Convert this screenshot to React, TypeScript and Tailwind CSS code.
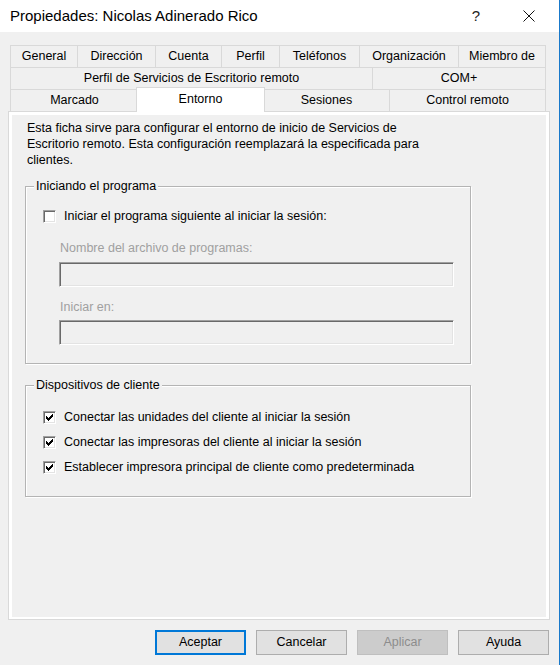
const row1 = [
  { label: "General", w: "w-[67px]" },
  { label: "Dirección", w: "w-[78px]" },
  { label: "Cuenta", w: "w-[66px]" },
  { label: "Perfil", w: "w-[58px]" },
  { label: "Teléfonos", w: "w-[80px]" },
  { label: "Organización", w: "w-[99px]" },
  { label: "Miembro de", w: "w-[88px]" },
]

const row2 = [
  { label: "Perfil de Servicios de Escritorio remoto", w: "w-[362px]" },
  { label: "COM+", w: "w-[174px]" },
]

const row3 = [
  { label: "Marcado", w: "w-[128px]" },
  { label: "Entorno", w: "w-[129px]", selected: true },
  { label: "Sesiones", w: "w-[126px]" },
  { label: "Control remoto", w: "w-[157px]" },
]

type TabDef = { label: string; w: string; selected?: boolean }

function TabRow({ tabs }: { tabs: TabDef[] }) {
  return (
    <div className="flex h-[22px]">
      {tabs.map((t) =>
        t.selected ? (
          <div
            key={t.label}
            className={`${t.w} relative z-10 -mx-[2px] -mt-[2px] flex h-[25px] items-center justify-center border-x border-t border-[#d9d9d9] bg-white pb-[1px]`}
          >
            {t.label}
          </div>
        ) : (
          <div
            key={t.label}
            className={`${t.w} flex h-[22px] items-center justify-center border-l border-t border-[#d9d9d9] bg-[#f0f0f0] last:border-r`}
          >
            {t.label}
          </div>
        )
      )}
    </div>
  )
}

function CheckBox({ checked }: { checked?: boolean }) {
  return (
    <span className="flex h-[13px] w-[13px] shrink-0 items-center justify-center border border-b-white border-l-[#a0a0a0] border-r-white border-t-[#a0a0a0] bg-white shadow-[inset_1px_1px_0_#696969,inset_-1px_-1px_0_#e3e3e3]">
      {checked && (
        <svg width="7" height="7" viewBox="0 0 7 7" shapeRendering="crispEdges">
          <rect x="0" y="2" width="1" height="3" fill="#000" />
          <rect x="1" y="3" width="1" height="3" fill="#000" />
          <rect x="2" y="4" width="1" height="3" fill="#000" />
          <rect x="3" y="3" width="1" height="3" fill="#000" />
          <rect x="4" y="2" width="1" height="3" fill="#000" />
          <rect x="5" y="1" width="1" height="3" fill="#000" />
          <rect x="6" y="0" width="1" height="3" fill="#000" />
        </svg>
      )}
    </span>
  )
}

function CheckRow({ label, checked }: { label: string; checked?: boolean }) {
  return (
    <div className="ml-[9px] flex h-[16px] items-center gap-[8px]">
      <CheckBox checked={checked} />
      <span className="leading-[16px]">{label}</span>
    </div>
  )
}

function TextBox() {
  return (
    <div className="ml-[25px] h-[25px] w-[395px] border border-b-white border-l-[#a0a0a0] border-r-white border-t-[#a0a0a0] bg-[#f0f0f0] shadow-[inset_1px_1px_0_#696969,inset_-1px_-1px_0_#e3e3e3]" />
  )
}

function Button({ label, primary, disabled }: { label: string; primary?: boolean; disabled?: boolean }) {
  const look = primary
    ? "border-2 border-[#0078d7] bg-[#e1e1e1] text-black"
    : disabled
      ? "border border-[#bfbfbf] bg-[#cccccc] text-[#8c8c8c]"
      : "border border-[#adadad] bg-[#e1e1e1] text-black"
  return (
    <div className={`flex h-[25px] w-[91px] items-center justify-center ${look}`}>{label}</div>
  )
}

export default function App() {
  return (
    <div className="h-[665px] w-[560px] overflow-hidden border-r border-[#1979ca] bg-[#f0f0f0] font-['Liberation_Sans',Arial,sans-serif] text-[12.5px] text-black">
      {/* barra de título */}
      <div className="flex h-[32px] items-center bg-white">
        <span className="flex-1 pl-[10px] text-[15px]">Propiedades: Nicolas Adinerado Rico</span>
        <span className="mr-[7px] w-[46px] text-center text-[15px] text-[#222]">?</span>
        <span className="mr-[7px] flex w-[46px] justify-center">
          <svg width="12" height="12" viewBox="0 0 12 12">
            <path d="M0.5 0.5 L11.5 11.5 M11.5 0.5 L0.5 11.5" stroke="#111" strokeWidth="1" />
          </svg>
        </span>
      </div>

      {/* pestañas */}
      <div className="ml-[10px] mt-[13px] w-[536px]">
        <TabRow tabs={row1} />
        <TabRow tabs={row2} />
        <TabRow tabs={row3} />
      </div>

      {/* página Entorno */}
      <div className="ml-[8px] h-[509px] w-[542px] border border-[#d9d9d9] bg-white px-[3px] pb-[2px] pt-[3px]">
        <div className="h-full bg-[#f0f0f0]">
          <p className="whitespace-nowrap pl-[15px] pt-[5px] leading-[16px]">
            Esta ficha sirve para configurar el entorno de inicio de Servicios de
            <br />
            Escritorio remoto. Esta configuración reemplazará la especificada para
            <br />
            clientes.
          </p>

          <fieldset className="ml-[13px] mt-[10px] w-[446px] border border-[#b4b4b4] px-[8px] pb-[18px] shadow-[inset_1px_1px_0_#fff,1px_1px_0_#fff]">
            <legend className="bg-[#f0f0f0] px-[2px] leading-[16px]">Iniciando el programa</legend>
            <div className="mt-[14px]">
              <CheckRow label="Iniciar el programa siguiente al iniciar la sesión:" />
            </div>
            <div className="ml-[26px] mt-[16px] leading-[16px] text-[#a0a0a0]">Nombre del archivo de programas:</div>
            <div className="mt-[6px]">
              <TextBox />
            </div>
            <div className="ml-[26px] mt-[12px] leading-[16px] text-[#a0a0a0]">Iniciar en:</div>
            <div className="mt-[5px]">
              <TextBox />
            </div>
          </fieldset>

          <fieldset className="ml-[13px] mt-[13px] w-[446px] border border-[#b4b4b4] px-[8px] pb-[21px] shadow-[inset_1px_1px_0_#fff,1px_1px_0_#fff]">
            <legend className="bg-[#f0f0f0] px-[2px] leading-[16px]">Dispositivos de cliente</legend>
            <div className="mt-[16px] flex flex-col gap-[9px]">
              <CheckRow label="Conectar las unidades del cliente al iniciar la sesión" checked />
              <CheckRow label="Conectar las impresoras del cliente al iniciar la sesión" checked />
              <CheckRow label="Establecer impresora principal de cliente como predeterminada" checked />
            </div>
          </fieldset>
        </div>
      </div>

      {/* botones */}
      <div className="mt-[10px] flex justify-end gap-[10px] pr-[10px]">
        <Button label="Aceptar" primary />
        <Button label="Cancelar" />
        <Button label="Aplicar" disabled />
        <Button label="Ayuda" />
      </div>
    </div>
  )
}
